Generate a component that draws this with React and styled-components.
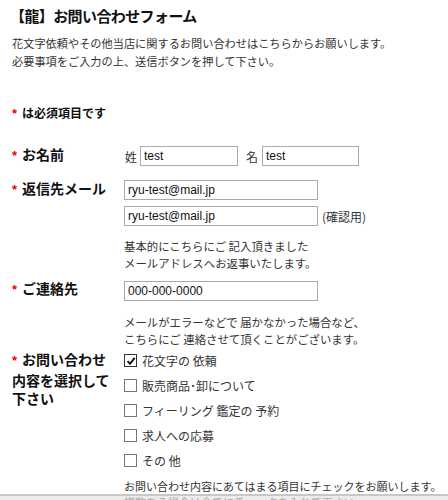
import React from 'react'
import styled, { createGlobalStyle } from 'styled-components'

const GlobalStyle = createGlobalStyle`
  html, body {
    margin: 0;
    padding: 0;
    background: #fff;
  }
  body {
    font-family: "Noto Sans CJK JP", "Noto Sans", sans-serif;
    color: #333;
    overflow: hidden;
  }
`

const Page = styled.div`
  width: 448px;
  height: 500px;
  overflow: hidden;
  position: relative;
  padding: 6px 0 0 12px;
  box-sizing: border-box;
`

const Title = styled.h1`
  margin: 0 0 0 -2px;
  font-size: 15px;
  line-height: 20px;
  font-weight: bold;
  color: #111;
  letter-spacing: -0.6px;
`

const Lead = styled.p`
  margin: ${(p) => p.$top || 0}px 0 0;
  font-size: 11.2px;
  line-height: 18px;
  color: #333;
`

const Required = styled.span`
  color: #e00;
  font-weight: bold;
  font-size: 13px;
  margin-right: 5px;
  font-family: "Liberation Sans", sans-serif;
`

const Notice = styled.p`
  margin: 34px 0 0;
  font-size: 12px;
  line-height: 18px;
  font-weight: bold;
  color: #111;
`

const Row = styled.div`
  display: flex;
  align-items: flex-start;
  margin-top: ${(p) => p.$top || 0}px;
`

const Label = styled.div`
  width: 112px;
  flex-shrink: 0;
  font-size: 14px;
  font-weight: bold;
  line-height: ${(p) => p.$lh || 18}px;
  color: #111;
  margin-top: ${(p) => p.$top || 0}px;
`

const Field = styled.div`
  display: flex;
  flex-direction: column;
`

const Line = styled.div`
  display: flex;
  align-items: center;
  margin-top: ${(p) => p.$top || 0}px;
`

const Small = styled.span`
  font-size: 12px;
  color: #333;
  margin: ${(p) => p.$m || '0'};
`

const Input = styled.input`
  box-sizing: border-box;
  width: ${(p) => p.$w}px;
  height: 20px;
  border: 1px solid #aaa;
  padding: 0 3px;
  margin: 0;
  font-family: "Liberation Sans", Arial, sans-serif;
  font-size: 12px;
  color: #111;
  outline: none;
  background: #fff;
`

const Note = styled.p`
  margin: ${(p) => p.$top || 0}px 0 0 112px;
  font-size: ${(p) => p.$size || 11.4}px;
  line-height: ${(p) => p.$lh || 17}px;
  color: #333;
  white-space: nowrap;
`

const Checks = styled.div`
  display: flex;
  flex-direction: column;
`

const CheckRow = styled.label`
  display: flex;
  align-items: center;
  height: 25px;
  font-size: 12px;
  color: #333;
`

const Box = styled.span`
  width: 11px;
  height: 11px;
  border: 1px solid ${(p) => (p.$on ? '#333' : '#777')};
  background: #fff;
  margin-right: 5px;
  display: flex;
  align-items: center;
  justify-content: center;
`

const Fold = styled.div`
  position: absolute;
  left: 0;
  right: 0;
  top: 494px;
  height: 6px;
  border-top: 2px solid #c8c8c8;
  background: #ececec;
  overflow: hidden;
`

const FoldText = styled.div`
  margin: -2px 0 0 124px;
  font-size: 11px;
  line-height: normal;
  color: #aaa;
  white-space: nowrap;
`

const Check = ({ on, children }) => (
  <CheckRow>
    <Box $on={on}>
      {on && (
        <svg width="10" height="10" viewBox="0 0 10 10">
          <path d="M1.5 5.2 L4 7.8 L8.7 1.8" fill="none" stroke="#111" strokeWidth="1.9" />
        </svg>
      )}
    </Box>
    {children}
  </CheckRow>
)

const options = [
  '花文字の 依頼',
  '販売商品･卸について',
  'フィーリング 鑑定の 予約',
  '求人への応募',
  'その 他',
]

export default function App() {
  return (
    <Page>
      <GlobalStyle />
      <Title>【龍】お問い合わせフォーム</Title>
      <Lead $top={8}>
        花文字依頼やその他当店に関するお問い合わせはこちらからお願いします。
        <br />
        必要事項をご入力の上、送信ボタンを押して下さい。
      </Lead>
      <Notice>
        <Required>*</Required>は必須項目です
      </Notice>

      <Row $top={23}>
        <Label $top={-1}>
          <Required>*</Required>お名前
        </Label>
        <Line>
          <Small $m="0 3px 0 1px">姓</Small>
          <Input $w={98} defaultValue="test" />
          <Small $m="0 4px 0 8px">名</Small>
          <Input $w={97} defaultValue="test" />
        </Line>
      </Row>

      <Row $top={14}>
        <Label $top={-1}>
          <Required>*</Required>返信先メール
        </Label>
        <Field>
          <Input $w={194} defaultValue="ryu-test@mail.jp" />
          <Line $top={6}>
            <Input $w={194} defaultValue="ryu-test@mail.jp" />
            <Small $m="0 0 0 4px">(確認用)</Small>
          </Line>
        </Field>
      </Row>
      <Note $top={12}>
        基本的にこちらにご 記入頂きました
        <br />
        メールアドレスへお返事いたします。
      </Note>

      <Row $top={9}>
        <Label $top={-2}>
          <Required>*</Required>ご連絡先
        </Label>
        <Input $w={194} defaultValue="000-000-0000" />
      </Row>
      <Note $top={13}>
        メールがエラーなどで 届かなかった場合など、
        <br />
        こちらにご 連絡させて頂くことがございます。
      </Note>

      <Row $top={0}>
        <Label $top={2} $lh={18.5}>
          <Required>*</Required>お問い合わせ
          <br />
          内容を選択して
          <br />
          下さい
        </Label>
        <Checks>
          {options.map((o, i) => (
            <Check key={o} on={i === 0}>
              {o}
            </Check>
          ))}
        </Checks>
      </Row>
      <Note $top={6} $size={11} $lh={15}>
        お問い合わせ内容にあてはまる項目にチェックをお願いします。
      </Note>

      <Fold>
        <FoldText>複数ある場合は全てにチェックを入れて下さい。</FoldText>
      </Fold>
    </Page>
  )
}
